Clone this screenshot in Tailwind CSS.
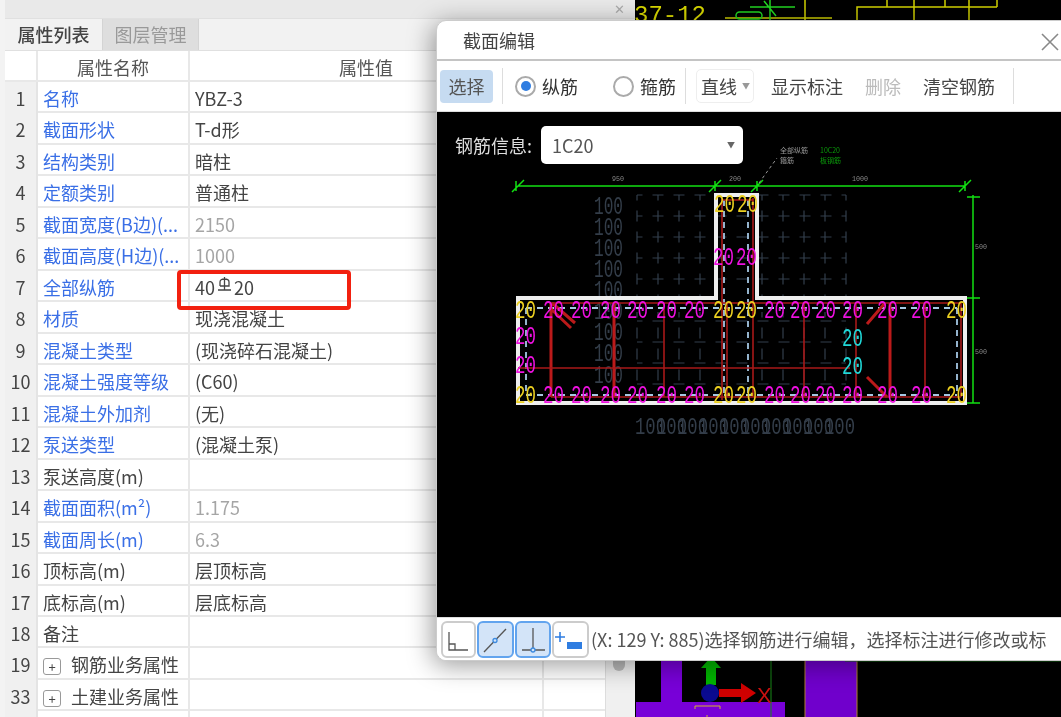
<!DOCTYPE html>
<html lang="zh">
<head>
  <meta charset="UTF-8" />
  <title>截面编辑</title>
  <script src="https://cdn.jsdelivr.net/npm/@tailwindcss/browser@4"></script>
</head>
<body class="bg-white font-['Noto_Sans_CJK_SC',sans-serif] text-[#444]">
<div class="relative flex w-[1061px] h-[717px] overflow-hidden blur-[0.5px]">

  <!-- left panel -->
  <div class="w-[635px] h-full flex flex-col bg-[#f3f3f3] pl-[5px]">
    <div class="h-[18px] bg-[#e9e9e9] flex justify-end pr-[10px] text-[#aaa] text-[13px] leading-[18px]">✕</div>
    <div class="h-[33px] flex text-[18px] border-y border-[#e0e0e0] bg-[#f2f2f2]">
      <div class="w-[97px] flex items-center justify-center font-medium text-[#444]">属性列表</div>
      <div class="w-[97px] flex items-center justify-center bg-[#dedede] text-[#999] border-x border-[#d4d4d4]">图层管理</div>
    </div>
    <div class="flex-1 flex min-h-0">
      <div id="table" class="w-[600px] bg-white text-[18px]"></div>
      <div class="flex-1 bg-[#f0f0f0] border-l border-[#ddd] relative">
        <div class="absolute left-[7px] top-[600px] w-[12px] h-[20px] rounded-full bg-[#bbb]"></div>
      </div>
    </div>
  </div>

  <!-- cad canvas -->
  <div class="flex-1 bg-black h-full"></div>
  <svg id="cad" class="absolute left-0 top-0" width="1061" height="717" viewBox="0 0 1061 717" fill="none">
    <text x="634" y="22" font-family="Liberation Mono" font-size="24" fill="#d8d800">37-12</text>
    <g stroke="#d4d400" stroke-width="1.5">
      <path d="M725 18H832M805 0V20M857 20V7H997M887 0V7M914 0V20M945 0V7M969 0V20M997 0V7" />
    </g>
    <g stroke="#22d822" stroke-width="1.5">
      <path d="M750 7H795M770 0V20M764 1L776 16" />
      <rect x="736" y="12" width="26" height="7" rx="3.5" />
    </g>
    <!-- bottom part of the model -->
    <path d="M661 655H682V702H785V717H636V702H661Z" fill="#7800d8" />
    <rect x="805" y="655" width="52" height="62" fill="#7000cc" />
    <path d="M771 655V717" stroke="#188a18" />
    <path d="M805 655V717M857 655V717" stroke="#b08030" />
    <path d="M845 661H1061" stroke="#1d7a1d" />
    <path d="M706 685V668H701L711 657L721 668H716V685Z" fill="#00b400" />
    <path d="M719 689H741V683L756 693L741 703V697H719Z" fill="#d00000" />
    <circle cx="710" cy="693" r="9" fill="#0a0a90" />
    <text x="757" y="703" font-family="Liberation Sans" font-size="22" fill="#c81010">X</text>
    <path d="M695 709V706H720V709M706 716H708" stroke="#d0b030" />
  </svg>

  <!-- red highlight -->
  <div class="absolute left-[177px] top-[270px] w-[174px] h-[40px] border-[4px] border-[#f2200f] rounded-[4px]"></div>

  <!-- dialog -->
  <div class="absolute left-[436px] top-[20px] w-[640px] h-[641px] flex flex-col bg-white rounded-[10px] border border-[#ccc] shadow-[-3px_4px_26px_rgba(0,0,0,0.4)] overflow-hidden">
    <div class="h-[40px] flex items-center pl-[26px] text-[18px] text-[#444] shrink-0 border-b-2 border-[#c4c4c4]">
      截面编辑
      <span class="absolute left-[603px] top-[5px] w-[20px] h-[30px]">
        <svg width="20" height="30" viewBox="0 0 20 30" stroke="#888" stroke-width="1.6"><path d="M2 8L18 24M18 8L2 24" /></svg>
      </span>
    </div>
    <div class="h-[50px] flex items-center pl-[3px] text-[18px] shrink-0">
      <div class="w-[53px] h-[33px] bg-[#c6dbf1] rounded-[4px] flex items-center justify-center text-[#555]">选择</div>
      <div class="w-px h-[36px] bg-[#ddd] ml-[9px]"></div>
      <div class="ml-[12px] w-[21px] h-[21px] rounded-full border-2 border-[#aaa] flex items-center justify-center">
        <div class="w-[10px] h-[10px] rounded-full bg-[#2f7de1]"></div>
      </div>
      <span class="ml-[6px] w-[72px] text-[#333]">纵筋</span>
      <div class="w-[21px] h-[21px] ml-[-1px] mr-[6px] rounded-full border-2 border-[#aaa]"></div>
      <span class="text-[#333]">箍筋</span>
      <div class="w-px h-[36px] bg-[#ddd] ml-[9px]"></div>
      <div class="ml-[10px] w-[58px] h-[34px] border border-[#eee] rounded-[5px] flex items-center pl-[4px]">直线<span class="ml-[5px] text-[8px] text-[#999]">▼</span></div>
      <span class="ml-[17px]">显示标注</span>
      <span class="ml-[22px] text-[#bbb]">删除</span>
      <span class="ml-[22px]">清空钢筋</span>
      <div class="w-px h-[36px] bg-[#ddd] ml-[18px]"></div>
    </div>
    <div class="flex-1 min-h-0 relative border-t border-[#ddd]">
      <div class="absolute inset-0 bg-black"></div>
      <div class="relative flex items-center pl-[18px] pt-[14px] text-[18px] text-[#ddd]">
        <span>钢筋信息:</span>
        <div class="ml-[9px] w-[202px] h-[38px] bg-white rounded-[5px] flex items-center justify-between pl-[11px] pr-[8px] text-[#555]">
          1C20<span class="text-[8px] text-[#666]">▼</span>
        </div>
      </div>
      <svg id="section" class="absolute left-[-1px] top-[-93px]" width="640" height="600" viewBox="436 19 640 600" fill="none"></svg>
    </div>
    <div class="h-[43px] flex items-center pl-[4px] gap-[1px] shrink-0 border-t border-[#ddd] bg-white text-[18px] text-[#555] whitespace-nowrap">
      <div class="w-[35px] h-[37px] shrink-0 border-2 border-[#ccc] rounded-[6px]">
        <svg width="31" height="33" viewBox="0 0 31 33" fill="none" stroke="#555" stroke-width="1.3"><path d="M6 9V27H25M6 21H12V27" /></svg>
      </div>
      <div class="w-[37px] h-[37px] shrink-0 border-2 border-[#62a4ee] bg-[#d3e4f8] rounded-[6px]">
        <svg width="33" height="33" viewBox="0 0 33 33" fill="none" stroke="#555" stroke-width="1.3"><path d="M5 29L27 6" /><circle cx="16" cy="17.5" r="2" stroke="#3d8be0" fill="#d3e4f8" /></svg>
      </div>
      <div class="w-[36px] h-[37px] shrink-0 border-2 border-[#62a4ee] bg-[#d3e4f8] rounded-[6px]">
        <svg width="32" height="33" viewBox="0 0 32 33" fill="none" stroke="#555" stroke-width="1.3"><path d="M16 5V26M5 27H28" /><circle cx="16" cy="27" r="2" stroke="#3d8be0" fill="#d3e4f8" /></svg>
      </div>
      <div class="w-[37px] h-[37px] shrink-0 border-2 border-[#ccc] rounded-[6px]">
        <svg width="33" height="33" viewBox="0 0 33 33" fill="none" stroke="#2f7de1" stroke-width="1.6"><path d="M6 9V19M1 14H11" /><rect x="13" y="19" width="15" height="7" fill="#2f7de1" stroke="none" /></svg>
      </div>
      <div class="ml-[1px] w-[456px] overflow-hidden">(X: 129 Y: 885)选择钢筋进行编辑，选择标注进行修改或标注</div>
    </div>
  </div>
</div>

<script>
  // property rows: [no, name, value, name colour, value colour]
  const BLUE = 'text-[#3a6fe6]', DARK = 'text-[#444]', GREY = 'text-[#a5a5a5]';
  const rows = [
    [1, '名称', 'YBZ-3', BLUE, DARK], [2, '截面形状', 'T-d形', BLUE, DARK],
    [3, '结构类别', '暗柱', BLUE, DARK], [4, '定额类别', '普通柱', BLUE, DARK],
    [5, '截面宽度(B边)(...', '2150', BLUE, GREY], [6, '截面高度(H边)(...', '1000', BLUE, GREY],
    [7, '全部纵筋', 'REBAR', BLUE, DARK], [8, '材质', '现浇混凝土', BLUE, DARK],
    [9, '混凝土类型', '(现浇碎石混凝土)', BLUE, DARK], [10, '混凝土强度等级', '(C60)', BLUE, DARK],
    [11, '混凝土外加剂', '(无)', BLUE, DARK], [12, '泵送类型', '(混凝土泵)', BLUE, DARK],
    [13, '泵送高度(m)', '', DARK, DARK], [14, '截面面积(m²)', '1.175', BLUE, GREY],
    [15, '截面周长(m)', '6.3', BLUE, GREY], [16, '顶标高(m)', '层顶标高', DARK, DARK],
    [17, '底标高(m)', '层底标高', DARK, DARK], [18, '备注', '', DARK, DARK],
    [19, '+钢筋业务属性', '', DARK, DARK], [33, '+土建业务属性', '', DARK, DARK], ['', '', '', DARK, DARK]
  ];
  const rebar = '40<svg class="inline-block mx-[2px] align-[3px]" width="15" height="15" viewBox="0 0 15 15" fill="none" stroke="#444" stroke-width="1.3"><path d="M3 9V5Q3 2 7.500 2Q12 2 12 5V9H3M7.500 0V13M1 13H14" /></svg>20';
  const rowClass = 'grid grid-cols-[33px_152px_354px_61px] h-[31.48px] border-b-2 border-[#e8e8e8] leading-[32px]';
  const nameCell = n => n.startsWith('+')
    ? `<span class="inline-flex items-center justify-center w-[18px] h-[17px] mr-[10px] border border-[#999] rounded-[3px] text-[13px] leading-none">+</span>${n.slice(1)}`
    : n;
  let html = `<div class="${rowClass} text-[#555] h-[31px]">
    <div class="border-r-2 border-[#e8e8e8]"></div>
    <div class="text-center border-r-2 border-[#e8e8e8]">属性名称</div>
    <div class="text-center border-r-2 border-[#e8e8e8]">属性值</div><div></div></div>`;
  rows.forEach(r => {
    html += `<div class="${rowClass}">
      <div class="bg-[#f0f0f0] text-center text-[#444] border-r-2 border-[#e4e4e4]">${r[0]}</div>
      <div class="pl-[5px] whitespace-nowrap overflow-hidden border-r-2 border-[#e8e8e8] ${r[3]}">${nameCell(r[1])}</div>
      <div class="pl-[5px] border-r-2 border-[#e8e8e8] ${r[4]}">${r[2] === 'REBAR' ? rebar : r[2]}</div>
      <div></div></div>`;
  });
  document.getElementById('table').innerHTML = html;

  // section drawing, in page coordinates
  const gridLines = [];
  [637, 658, 679, 700, 762, 783, 804, 825, 846].forEach(x => gridLines.push(`M${x} 195V298M${x} 312V390`));
  [195, 216, 237, 258, 279, 321, 342, 363, 384].forEach(y => gridLines.push(`M637 ${y}H846`));
  const txt = (x, y, s, fill, size, w) =>
    `<text x="${x}" y="${y}" font-family="Liberation Mono" font-size="${size}" fill="${fill}" textLength="${w}" lengthAdjust="spacingAndGlyphs">${s}</text>`;
  let out = `<path d="${gridLines.join('')}" stroke="#333f4c" stroke-width="1.2" stroke-dasharray="11 10" stroke-dashoffset="5.5" />`;
  [206, 227, 248, 269, 290, 311, 332, 353, 375].forEach(y => out += txt(594, y + 8, '100', '#333d49', 26, 29));
  for (let i = 0; i < 10; i++) out += txt(635 + i * 21, 434, '100', '#333d49', 24, 31);
  // dimensions
  out += `<path d="M518 186H965M973 195V403M512 192L524 180M709 192L721 180M751 192L763 180M959 192L971 180M516 181V191M715 181V191M757 181V191M965 181V191M967 197H980M967 298H980M967 403H980" stroke="#12e012" stroke-width="1.500" />`;
  out += `<path d="M759 183L777 158" stroke="#999" stroke-dasharray="3 3" />`;
  [[612, 181, '950', 12], [729, 181, '200', 12], [852, 181, '1000', 16], [975, 249, '500', 12], [975, 354, '500', 12]]
    .forEach(d => out += txt(d[0], d[1], d[2], '#888', 8, d[3]));
  out += `<text x="780" y="153" font-size="7" fill="#999">全部纵筋</text><text x="780" y="163" font-size="7" fill="#999">箍筋</text>`;
  out += `<text x="820" y="153" font-size="7" fill="#0a9a0a">10C20</text><text x="820" y="163" font-size="7" fill="#0a9a0a">板钢筋</text>`;
  // concrete outline and stirrups
  out += `<path d="M716 298V195H757V298H965V403H518V298Z" stroke="#eeeeee" stroke-width="4" />`;
  out += `<path d="M526 308H957M526 395H957M526 308V395M957 308V395M724 200V395M748 200V395" stroke="#a5c8e4" stroke-width="1.800" stroke-dasharray="6 5" />`;
  out += `<path d="M551 303V397M614 303V397M890 303V397M552 303L575 323M550 308L571 328M885 303L867 324M867 377L887 397" stroke="#bb1a1a" stroke-width="3" />`;
  out += `<path d="M551 303H961M551 397H961M518 368H850M664 303V397M722 198V400M727 303V397M753 198V397M722 200H753M804 303V397M856 303V397M925 303V397M961 303V397" stroke="#a81818" stroke-width="1.600" />`;
  // bar labels
  const put = (xs, y, c) => xs.forEach(x => out += txt(x, y + 8, '20', c, 26, 21));
  const MAG = '#ee10e0', YEL = '#ecd020', CYAN = '#20d8d8';
  put([543, 571, 600, 627, 656, 684, 764, 790, 815, 842, 877, 911], 310, MAG);
  put([543, 571, 600, 627, 656, 684, 764, 790, 815, 842, 877, 911], 395, MAG);
  put([515, 713, 736, 946], 310, YEL);
  put([515, 713, 736, 946], 395, YEL);
  put([515], 336, MAG); put([515], 365, MAG);
  put([842], 338, CYAN); put([842], 366, CYAN);
  put([714, 737], 204, YEL); put([713, 736], 257, MAG);
  document.getElementById('section').innerHTML = out;
</script>
</body>
</html>
